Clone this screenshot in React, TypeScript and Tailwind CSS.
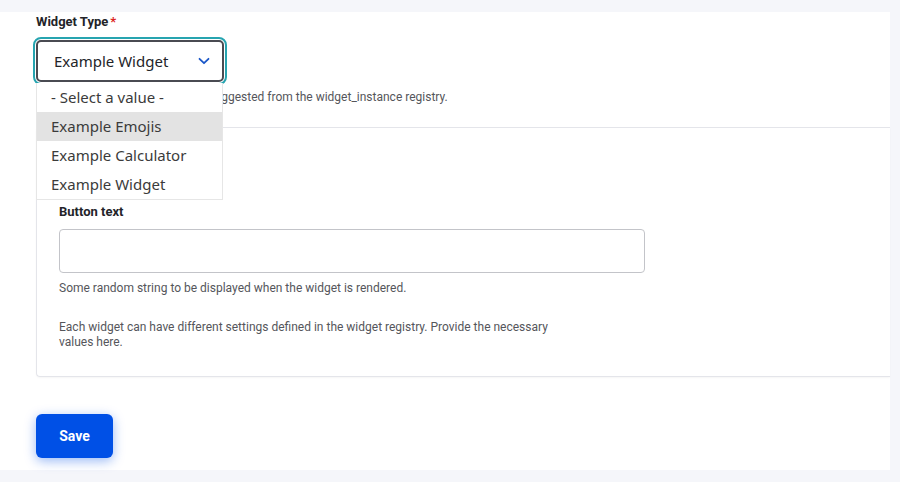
import React from 'react';

const options = ['- Select a value -', 'Example Emojis', 'Example Calculator', 'Example Widget'];

const App: React.FC = () => {
  return (
    <div className="w-[900px] h-[482px] bg-[#f5f6fa] overflow-hidden font-['Roboto',_'Liberation_Sans',_sans-serif] text-[#222330]">
      <div className="mt-[12px] mr-[10px] h-[458px] bg-white pl-[36px] pt-[2px]">
        {/* Widget type */}
        <div className="relative">
          <label className="flex items-center text-[13px] font-bold leading-[16px] h-[16px] text-[#232429]">
            Widget Type<span className="ml-[2px] text-[#dc2323]">*</span>
          </label>
          <div className="mt-[7px] -ml-[3px] w-[194px] h-[48px] rounded-[8px] border-[2px] border-[#26a4b0] p-[1px]">
            <div className="h-full rounded-[5px] border-[2px] border-[#4a4b52] flex items-center justify-between pl-[16px] pr-[11px]">
              <span className="text-[15px] text-[#232429] font-['Noto_Sans',_sans-serif]">Example Widget</span>
              <svg width="14" height="14" viewBox="0 0 14 14" fill="none">
                <path d="M2.5 4.8 L7 9.2 L11.5 4.8" stroke="#1b57c8" strokeWidth="1.8" strokeLinecap="round" strokeLinejoin="round" />
              </svg>
            </div>
          </div>
          <p className="mt-[5px] text-[12px] leading-[15px] text-[#55565b] whitespace-nowrap">
            Machine name of the widget, as sug&shy;gested from the widget_instance registry.
          </p>

          {/* Dropdown list */}
          <ul className="absolute left-0 top-[69px] w-[187px] bg-white border border-[#e6e6e6] border-t-0 font-['Noto_Sans',_sans-serif] text-[15px] text-[#3b3b3b] z-10">
            {options.map((o, i) => (
              <li key={o} className={`h-[29px] leading-[29px] pl-[14px] ${i === 1 ? 'bg-[#e3e3e3]' : ''}`}>
                {o}
              </li>
            ))}
          </ul>
        </div>

        {/* Settings box */}
        <div className="mt-[22px] h-[250px] border border-[#e4e5ea] border-r-0 rounded-l-[4px] pl-[22px] pt-[76px] shadow-[0_1px_2px_rgba(0,0,0,0.04)]">
          <label className="block text-[13px] font-bold leading-[16px] text-[#232429]">Button text</label>
          <div className="mt-[9px] w-[586px] h-[44px] rounded-[4px] border border-[#c3c4c9] bg-white" />
          <p className="mt-[8px] text-[12px] leading-[15px] text-[#55565b]">
            Some random string to be displayed when the widget is rendered.
          </p>
          <p className="mt-[24px] w-[500px] text-[12px] leading-[15px] text-[#55565b]">
            Each widget can have different settings defined in the widget registry. Provide the necessary values here.
          </p>
        </div>

        <button className="mt-[37px] w-[77px] h-[44px] rounded-[6px] bg-[#0050e6] text-white text-[14px] font-bold shadow-[0_3px_12px_rgba(0,80,230,0.4)]">
          Save
        </button>
      </div>
    </div>
  );
};

export default App;
